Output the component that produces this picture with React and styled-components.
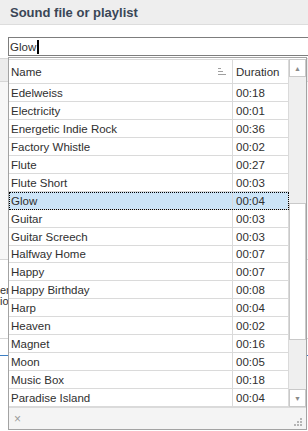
import React from "react";
import styled, { createGlobalStyle } from "styled-components";

const tracks = [
  { name: "Edelweiss", duration: "00:18" },
  { name: "Electricity", duration: "00:01" },
  { name: "Energetic Indie Rock", duration: "00:36" },
  { name: "Factory Whistle", duration: "00:02" },
  { name: "Flute", duration: "00:27" },
  { name: "Flute Short", duration: "00:03" },
  { name: "Glow", duration: "00:04" },
  { name: "Guitar", duration: "00:03" },
  { name: "Guitar Screech", duration: "00:03" },
  { name: "Halfway Home", duration: "00:07" },
  { name: "Happy", duration: "00:07" },
  { name: "Happy Birthday", duration: "00:08" },
  { name: "Harp", duration: "00:04" },
  { name: "Heaven", duration: "00:02" },
  { name: "Magnet", duration: "00:16" },
  { name: "Moon", duration: "00:05" },
  { name: "Music Box", duration: "00:18" },
  { name: "Paradise Island", duration: "00:04" },
];

const GlobalStyle = createGlobalStyle`
  body {
    margin: 0;
    background: #ffffff;
    font-family: "Liberation Sans", Arial, sans-serif;
    font-size: 11.5px;
    color: #333333;
  }
`;

const Window = styled.div`
  width: 308px;
  height: 431px;
  overflow: hidden;
  background: #ffffff;
  display: flex;
  flex-direction: column;
`;

const TitleBar = styled.div`
  height: 24px;
  flex: none;
  display: flex;
  align-items: center;
  padding-left: 10px;
  background: #eeeeee;
  border-bottom: 1px solid #dddddd;
  font-weight: bold;
  font-size: 13px;
  color: #3a4656;
`;

const Body = styled.div`
  flex: 1;
  padding-top: 12px;
  display: flex;
  flex-direction: column;
`;

const InputWrap = styled.div`
  position: relative;
  margin-left: 8px;
  z-index: 2;
`;

const SearchBox = styled.div`
  height: 17px;
  border: 1px solid #7d7d7d;
  border-right: none;
  display: flex;
  align-items: center;
  padding-left: 1px;
  color: #2f2f2f;
`;

const Caret = styled.span`
  display: inline-block;
  width: 2px;
  height: 14px;
  background: #000000;
  margin-left: 1px;
`;

const Popup = styled.div`
  position: absolute;
  top: 20px;
  left: 0;
  width: 297px;
  height: 371px;
  border: 1px solid #a3a3a3;
  background: #ffffff;
  display: flex;
  flex-direction: column;
`;

const ListArea = styled.div`
  flex: 1;
  display: flex;
  padding-top: 1px;
  min-height: 0;
`;

const Table = styled.div`
  flex: 1;
  display: flex;
  flex-direction: column;
`;

const Row = styled.div`
  display: grid;
  grid-template-columns: 224px 56px;
  height: ${(p) => (p.$header ? 25 : 18)}px;
  box-sizing: border-box;
  border-bottom: 1px solid #dadada;
  border-top: ${(p) => (p.$header ? "1px solid #dadada" : "none")};
  background: ${(p) => (p.$selected ? "#cce4f7" : "#ffffff")};
  outline: ${(p) => (p.$selected ? "1px dotted #000000" : "none")};
  outline-offset: -1px;
`;

const Cell = styled.div`
  display: flex;
  align-items: center;
  padding-left: ${(p) => (p.$dur ? 3 : 2)}px;
  padding-right: ${(p) => (p.$sort ? 6 : 0)}px;
  padding-top: 1px;
  justify-content: ${(p) => (p.$sort ? "space-between" : "flex-start")};
  border-right: 1px solid #dadada;
  white-space: nowrap;
  overflow: hidden;
  color: #2f2f2f;
`;

const SortIcon = styled.svg`
  width: 8px;
  height: 7px;
`;

const ScrollBar = styled.div`
  width: 17px;
  flex: none;
  display: flex;
  flex-direction: column;
  background: #efefef;
`;

const ScrollButton = styled.div`
  height: 18px;
  box-sizing: border-box;
  background: #ffffff;
  border: 1px solid #c9c9c9;
  display: flex;
  align-items: center;
  justify-content: center;
  color: #8a8a8a;
  font-size: 7px;
`;

const Track = styled.div`
  flex: 1;
  display: flex;
  flex-direction: column;
  padding-top: 126px;
`;

const Thumb = styled.div`
  height: 137px;
  background: #ffffff;
  border: 1px solid #c9c9c9;
  box-sizing: border-box;
`;

const Footer = styled.div`
  height: 21px;
  flex: none;
  background: #f4f4f4;
  border-top: 1px solid #dadada;
  display: flex;
  align-items: center;
  justify-content: space-between;
  padding: 0 4px 0 5px;
  color: #9a9a9a;
`;

const CloseMark = styled.span`
  font-size: 12px;
  line-height: 1;
`;

const Grip = styled.svg`
  width: 8px;
  height: 8px;
  margin-top: 6px;
`;

const Behind = styled.div`
  margin-top: 2px;
  display: flex;
  flex-direction: column;
`;

const TabStrip = styled.div`
  height: 22px;
  background: #ececec;
  border-top: 1px solid #d6d6d6;
  border-bottom: 1px solid #d6d6d6;
`;

const Panel = styled.div`
  height: ${(p) => p.$h}px;
  background: ${(p) => p.$bg || "#f7f7f7"};
  border-bottom: 1px solid ${(p) => p.$line || "#d6d6d6"};
`;

const BehindLabel = styled.div`
  padding-top: 25px;
  line-height: 11px;
  font-size: 11px;
  color: #2f2f2f;
`;

export default function App() {
  return (
    <Window>
      <GlobalStyle />
      <TitleBar>Sound file or playlist</TitleBar>
      <Body>
        <InputWrap>
          <SearchBox>
            Glow
            <Caret />
          </SearchBox>
          <Popup>
            <ListArea>
              <Table>
                <Row $header>
                  <Cell $sort>
                    Name
                    <SortIcon viewBox="0 0 8 7">
                      <path d="M0 0.5h3M0 3.5h5M0 6.5h8" stroke="#a0a0a0" strokeWidth="1" />
                    </SortIcon>
                  </Cell>
                  <Cell $dur>Duration</Cell>
                </Row>
                {tracks.map((t) => (
                  <Row key={t.name} $selected={t.name === "Glow"}>
                    <Cell>{t.name}</Cell>
                    <Cell $dur>{t.duration}</Cell>
                  </Row>
                ))}
              </Table>
              <ScrollBar>
                <ScrollButton>▲</ScrollButton>
                <Track>
                  <Thumb />
                </Track>
                <ScrollButton>▼</ScrollButton>
              </ScrollBar>
            </ListArea>
            <Footer>
              <CloseMark>×</CloseMark>
              <Grip viewBox="0 0 8 8">
                <rect x="6" y="0" width="2" height="2" fill="#b5b5b5" />
                <rect x="3" y="3" width="2" height="2" fill="#b5b5b5" />
                <rect x="6" y="3" width="2" height="2" fill="#b5b5b5" />
                <rect x="0" y="6" width="2" height="2" fill="#b5b5b5" />
                <rect x="3" y="6" width="2" height="2" fill="#b5b5b5" />
                <rect x="6" y="6" width="2" height="2" fill="#b5b5b5" />
              </Grip>
            </Footer>
          </Popup>
        </InputWrap>
        <Behind>
          <TabStrip />
          <Panel $h={177} />
          <Panel $h={78} $bg="#ffffff">
            <BehindLabel>
              er
              <br />
              io
            </BehindLabel>
          </Panel>
          <Panel $h={16} $bg="#ffffff" $line="#3c7fc4" />
        </Behind>
      </Body>
    </Window>
  );
}
